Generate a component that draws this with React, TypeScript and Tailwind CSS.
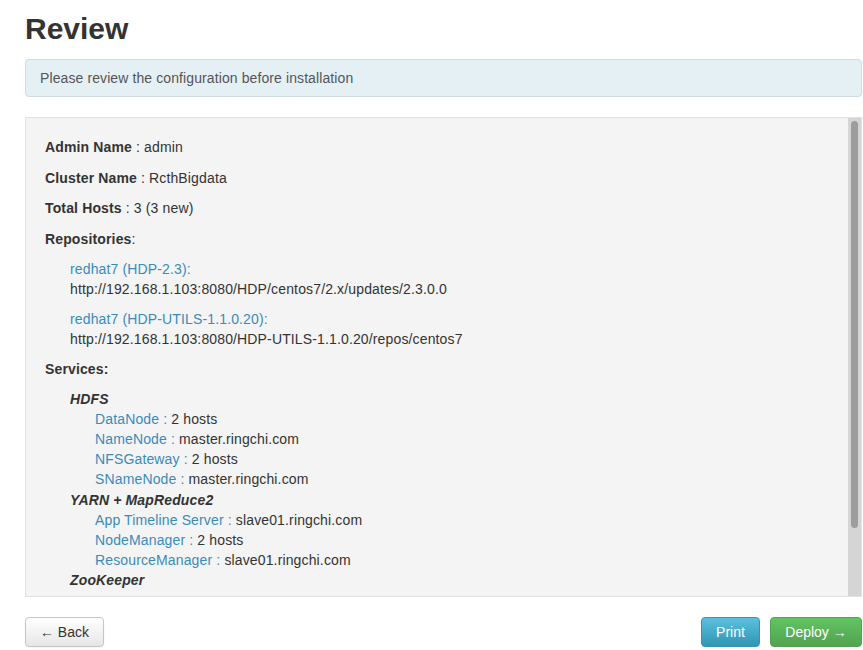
import React from "react";

const link = "text-[#3a8bbb]";

function Comp({ name, value }: { name: string; value: string }) {
  return (
    <div className="pl-[50px] leading-[20.2px]">
      <span className={link}>{name} :</span> {value}
    </div>
  );
}

function Svc({ name }: { name: string }) {
  return <div className="pl-[25px] leading-[20.2px] font-bold italic">{name}</div>;
}

export default function App() {
  return (
    <div
      className="bg-white text-[#333] text-[14px] pl-[25px] pr-[1px] w-[863px] h-[650px] overflow-hidden"
      style={{ fontFamily: '"Liberation Sans", Arial, sans-serif' }}
    >
      <h2 className="text-[30px] font-bold leading-[40px] pt-[9px] mb-[10px] text-[#333]">Review</h2>

      <div className="border border-[#cfdce2] bg-[#e5f0f5] rounded-[4px] py-[8px] pl-[14px] leading-[20px] text-[#555] tracking-[0.1px]">
        Please review the configuration before installation
      </div>

      <div className="mt-[20px] h-[480px] border border-[#e2e2e2] bg-[#f4f4f4] flex overflow-hidden tracking-[0.14px]">
        <div className="flex-1 pt-[19px] pl-[19px] overflow-hidden">
          <p className="leading-[20px] mb-[10.5px]">
            <b>Admin Name</b> : admin
          </p>
          <p className="leading-[20px] mb-[10.5px]">
            <b>Cluster Name</b> : RcthBigdata
          </p>
          <p className="leading-[20px] mb-[10.5px]">
            <b>Total Hosts</b> : 3 (3 new)
          </p>
          <p className="leading-[20px] mb-[10px]">
            <b>Repositories</b>:
          </p>
          <div className="pl-[25px] leading-[20px] mb-[10px]">
            <div className={link}>redhat7 (HDP-2.3):</div>
            <div>http://192.168.1.103:8080/HDP/centos7/2.x/updates/2.3.0.0</div>
          </div>
          <div className="pl-[25px] leading-[20px] mb-[10px]">
            <div className={link}>redhat7 (HDP-UTILS-1.1.0.20):</div>
            <div>http://192.168.1.103:8080/HDP-UTILS-1.1.0.20/repos/centos7</div>
          </div>
          <p className="leading-[20px] mb-[10px] font-bold">Services:</p>
          <Svc name="HDFS" />
          <Comp name="DataNode" value="2 hosts" />
          <Comp name="NameNode" value="master.ringchi.com" />
          <Comp name="NFSGateway" value="2 hosts" />
          <Comp name="SNameNode" value="master.ringchi.com" />
          <Svc name="YARN + MapReduce2" />
          <Comp name="App Timeline Server" value="slave01.ringchi.com" />
          <Comp name="NodeManager" value="2 hosts" />
          <Comp name="ResourceManager" value="slave01.ringchi.com" />
          <Svc name="ZooKeeper" />
        </div>
        <div className="w-[13px] bg-[#d5d5d5] flex flex-col">
          <div className="mt-[3px] ml-[3px] w-[7px] h-[407px] rounded-full bg-[#9d9d9d]" />
        </div>
      </div>

      <div className="mt-[20px] flex items-center">
        <button className="w-[79px] h-[30px] rounded-[4px] border border-[#c5c5c5] bg-gradient-to-b from-white to-[#e6e6e6] text-[#333] text-[14px] shadow-[inset_0_1px_0_rgba(255,255,255,0.2),0_1px_2px_rgba(0,0,0,0.05)]">
          ← Back
        </button>
        <div className="flex-1" />
        <button className="w-[59px] h-[30px] rounded-[4px] border border-[#2f96b4] bg-gradient-to-b from-[#5bc0de] to-[#2f96b4] text-white text-[14px]">
          Print
        </button>
        <button className="ml-[10px] w-[92px] h-[30px] rounded-[4px] border border-[#51a351] bg-gradient-to-b from-[#62c462] to-[#51a351] text-white text-[14px]">
          Deploy →
        </button>
      </div>
    </div>
  );
}
